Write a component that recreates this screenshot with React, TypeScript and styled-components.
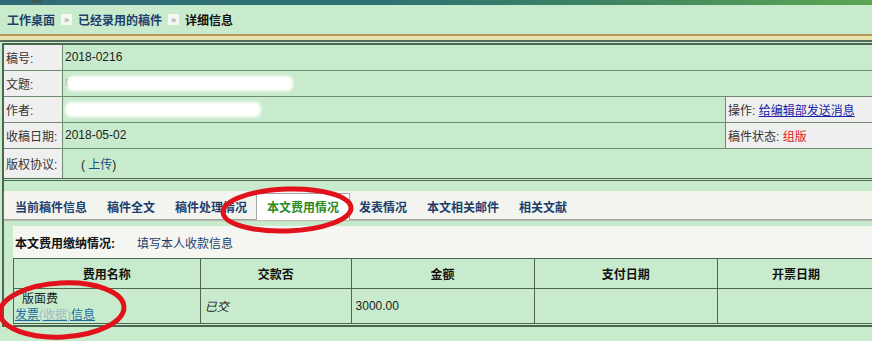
import React from "react"
import styled, { createGlobalStyle } from "styled-components"

const GREEN = "#c9ebcd"
const LINE = "#6f8c70"
const DARK = "#4d6650"
const NAVY = "#1d3f6c"

const Global = createGlobalStyle`
  html, body { margin: 0; padding: 0; background: ${GREEN}; }
  body {
    font-family: "Liberation Sans", "Noto Sans CJK SC", sans-serif;
    font-size: 12px;
    color: #222;
    overflow: hidden;
  }
`

const Page = styled.div`
  position: relative;
  width: 872px;
  height: 341px;
  overflow: hidden;
  background: ${GREEN};
`

const TopStrip = styled.div`
  height: 5px;
  background: linear-gradient(90deg, #2e6b78 0%, #2f7272 45%, #3e8462 70%, #5da651 100%);
`

const LogoTip = styled.span`
  display: block;
  margin-left: 32px;
  width: 10px;
  height: 3px;
  border-radius: 0 0 4px 4px;
  background: #3f5a4a;
`

const Breadcrumb = styled.nav`
  height: 29px;
  display: flex;
  align-items: center;
  padding-left: 7px;
  gap: 5px;
  font-weight: bold;
  font-size: 12px;
`

const Crumb = styled.span<{ current?: boolean }>`
  color: ${(p) => (p.current ? "#111" : NAVY)};
`

const Sep = styled.span`
  display: inline-flex;
  align-items: center;
  justify-content: center;
  width: 11px;
  height: 11px;
  background: #f4f7f2;
  color: #777;
  font-size: 9px;
  font-weight: normal;
  margin: 0 1px;
`

const Rule = styled.div`
  height: 4px;
  border-top: 2px solid #b99a5a;
  border-bottom: 2px solid #55695a;
  background: #e6e4ae;
  margin-bottom: 1px;
`

const Frame = styled.div`
  margin-left: 2px;
  border-left: 2px solid ${DARK};
`

const InfoTable = styled.table`
  width: 100%;
  border-collapse: collapse;
  border-top: 2px solid ${DARK};
  border-bottom: 3px double ${DARK};
`

const Row = styled.tr<{ tall?: boolean }>`
  height: ${(p) => (p.tall ? "31px" : "26px")};
  & > td { border-bottom: 1px solid ${LINE}; }
  &:last-child > td { border-bottom: none; }
`

const LabelCell = styled.td`
  width: 56px;
  padding: 0 0 0 2px;
  background: #efefef;
  border-right: 1px solid ${LINE};
  color: #333;
  white-space: nowrap;
`

const ValueCell = styled.td<{ indent?: number }>`
  background: ${GREEN};
  padding: 0 0 0 ${(p) => p.indent ?? 2}px;
  white-space: nowrap;
`

const SideCell = styled.td`
  width: 143px;
  background: #efefef;
  border-left: 1px solid ${LINE};
  padding-left: 2px;
  color: #333;
  white-space: nowrap;
`

const Blot = styled.span<{ w: number }>`
  display: inline-block;
  vertical-align: middle;
  width: ${(p) => p.w}px;
  height: 15px;
  background: #fff;
  border-radius: 6px;
  filter: blur(1.5px);
`

const Ghost = styled.span`
  color: #999;
  margin-right: -2px;
`

const BlueLink = styled.a`
  color: #1a22a8;
  text-decoration: underline;
`

const Red = styled.span`
  color: #e0201c;
`

const Plain = styled.span`
  color: #1a4f85;
`

const TabBar = styled.div`
  margin-top: 10px;
  height: 28px;
  display: flex;
  align-items: flex-end;
  background: #f4f4ef;
  border-bottom: 1px solid #9ea59d;
  box-shadow: 0 1px 1px #b8bdb5;
`

const Tab = styled.div<{ active?: boolean }>`
  height: 26px;
  display: flex;
  align-items: center;
  padding: 0 10px;
  font-weight: bold;
  color: ${(p) => (p.active ? "#2b8a22" : NAVY)};
  background: ${(p) => (p.active ? "#fff" : "transparent")};
  border: 1px solid ${(p) => (p.active ? "#a6a6a6" : "transparent")};
  border-bottom: none;
  margin-bottom: -1px;
  margin-right: -2px;
  white-space: nowrap;
`

const Panel = styled.div`
  margin-top: 6px;
  padding-left: 9px;
  border-bottom: 1px solid ${DARK};
`

const Card = styled.div`
  background: #f5f5f2;
  padding-top: 9px;
`

const CardHead = styled.div`
  display: flex;
  gap: 22px;
  padding-left: 2px;
  height: 16px;
  align-items: center;
  margin-bottom: 7px;
`

const Strong = styled.span`
  font-weight: bold;
  color: #111;
`

const FeeTable = styled.table`
  width: 862px;
  border-collapse: collapse;
  background: ${GREEN};
  border-bottom: 3px double ${DARK};
  & td, & th { border: 1px solid ${DARK}; }
`

const Th = styled.th<{ w: number }>`
  width: ${(p) => p.w}px;
  height: 29px;
  font-weight: bold;
  color: #111;
  text-align: center;
  padding: 0;
`

const Td = styled.td<{ italic?: boolean }>`
  height: 34px;
  padding: 0 0 0 4px;
  vertical-align: middle;
  font-style: ${(p) => (p.italic ? "italic" : "normal")};
  color: #222;
`

const NameCell = styled.td`
  padding: 2px 0 0 1px;
  line-height: 16px;
  vertical-align: top;
`

const Indented = styled.div`
  padding-left: 7px;
`

const InvoiceLink = styled.a`
  color: #1c6aa0;
  text-decoration: underline;
`

const Faint = styled.span`
  color: #9fb9c4;
`

const Marks = styled.svg`
  position: absolute;
  left: 0;
  top: 0;
  pointer-events: none;
`

const tabs = ["当前稿件信息", "稿件全文", "稿件处理情况", "本文费用情况", "发表情况", "本文相关邮件", "相关文献"]

export default function App() {
  return (
    <Page>
      <Global />
      <TopStrip>
        <LogoTip />
      </TopStrip>
      <Breadcrumb>
        <Crumb>工作桌面</Crumb>
        <Sep>»</Sep>
        <Crumb>已经录用的稿件</Crumb>
        <Sep>»</Sep>
        <Crumb current>详细信息</Crumb>
      </Breadcrumb>
      <Rule />
      <Frame>
        <InfoTable>
          <tbody>
            <Row>
              <LabelCell>稿号:</LabelCell>
              <ValueCell colSpan={2}>2018-0216</ValueCell>
            </Row>
            <Row>
              <LabelCell>文题:</LabelCell>
              <ValueCell colSpan={2}>
                <Ghost>r</Ghost>
                <Blot w={226} />
              </ValueCell>
            </Row>
            <Row>
              <LabelCell>作者:</LabelCell>
              <ValueCell>
                <Blot w={196} />
              </ValueCell>
              <SideCell>
                操作: <BlueLink>给编辑部发送消息</BlueLink>
              </SideCell>
            </Row>
            <Row>
              <LabelCell>收稿日期:</LabelCell>
              <ValueCell>2018-05-02</ValueCell>
              <SideCell>
                稿件状态: <Red>组版</Red>
              </SideCell>
            </Row>
            <Row tall>
              <LabelCell>版权协议:</LabelCell>
              <ValueCell colSpan={2} indent={18}>
                ( <Plain>上传</Plain>)
              </ValueCell>
            </Row>
          </tbody>
        </InfoTable>
        <TabBar>
          {tabs.map((t) => (
            <Tab key={t} active={t === "本文费用情况"}>
              {t}
            </Tab>
          ))}
        </TabBar>
        <Panel>
          <Card>
            <CardHead>
              <Strong>本文费用缴纳情况:</Strong>
              <Crumb>填写本人收款信息</Crumb>
            </CardHead>
            <FeeTable>
              <thead>
                <tr>
                  <Th w={187}>费用名称</Th>
                  <Th w={151}>交款否</Th>
                  <Th w={183}>金额</Th>
                  <Th w={184}>支付日期</Th>
                  <Th w={157}>开票日期</Th>
                </tr>
              </thead>
              <tbody>
                <tr>
                  <NameCell>
                    <Indented>版面费</Indented>
                    <InvoiceLink>
                      发票<Faint>(收据)</Faint>信息
                    </InvoiceLink>
                  </NameCell>
                  <Td italic>已交</Td>
                  <Td>3000.00</Td>
                  <Td />
                  <Td />
                </tr>
              </tbody>
            </FeeTable>
          </Card>
        </Panel>
      </Frame>
      <Marks width="872" height="341" viewBox="0 0 872 341">
        <ellipse cx="287" cy="210" rx="64" ry="21" fill="none" stroke="#e1121b" strokeWidth="5" transform="rotate(-2 287 210)" />
        <ellipse cx="62" cy="310" rx="62" ry="27" fill="none" stroke="#e1121b" strokeWidth="5" transform="rotate(-3 62 310)" />
      </Marks>
    </Page>
  )
}
